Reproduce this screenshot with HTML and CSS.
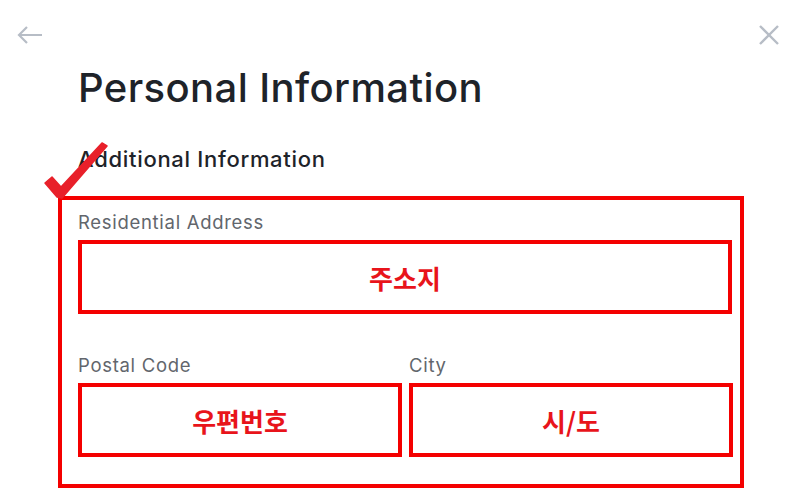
FILE: index.html
```html
<!DOCTYPE html>
<html lang="en">
<head>
<meta charset="utf-8">
<link rel="stylesheet" href="styles.css">
</head>
<body>
<div class="page">
  <div class="topbar">
    <svg class="icon back" width="28" height="20" viewBox="0 0 28 20"><path d="M26 10H3M11 2L3 10l8 8" fill="none" stroke="#b7bdc6" stroke-width="2.2"/></svg>
    <svg class="icon close" width="22" height="22" viewBox="0 0 22 22"><path d="M2 2l18 18M20 2L2 20" fill="none" stroke="#b7bdc6" stroke-width="2.4"/></svg>
  </div>
  <h1 class="title">Personal Information</h1>
  <h2 class="subtitle">Additional Information</h2>
  <div class="annot">
    <svg class="check" width="72" height="62" viewBox="0 0 72 62"><path d="M5 44 L12 38 L21 48 L62 4 L67 7 L22 59 L17 58 Z" fill="#e8202a" stroke="#e8202a" stroke-width="1.5" stroke-linejoin="round"/></svg>
    <div class="field">
      <div class="label">Residential Address</div>
      <div class="box">주소지</div>
    </div>
    <div class="row">
      <div class="field">
        <div class="label">Postal Code</div>
        <div class="box">우편번호</div>
      </div>
      <div class="field">
        <div class="label">City</div>
        <div class="box">시/도</div>
      </div>
    </div>
  </div>
</div>
</body>
</html>
```
FILE: styles.css
```css
html, body { margin: 0; padding: 0; background: #fff; }
body { font-family: Inter, "Noto Sans", "Noto Sans CJK KR", sans-serif; width: 800px; height: 488px; overflow: hidden; }
.page { position: relative; }
.topbar { display: flex; justify-content: space-between; align-items: center; padding: 24px 20px 0 16px; height: 22px; }
.title { margin: 20px 0 0 78px; font-size: 40px; line-height: 44px; font-weight: 500; color: #1e2329; letter-spacing: 0.4px; }
.subtitle { margin: 36px 0 0 78px; font-size: 22px; line-height: 26px; font-weight: 500; color: #1e2329; letter-spacing: 0.7px; }
.annot { position: relative; margin: 24px 0 0 58px; width: 686px; height: 292px; box-sizing: border-box; border: 4px solid #f40000; padding: 10px 8px 0 16px; }
.check { position: absolute; left: -22px; top: -61px; }
.label { font-size: 18.5px; line-height: 24px; color: #62666c; height: 30px; letter-spacing: 0.7px; }
.box { box-sizing: border-box; height: 74px; border: 4px solid #f40000; display: flex; align-items: center; justify-content: center; font-family: "Noto Sans CJK KR", sans-serif; font-weight: 700; font-size: 26px; color: #e8141b; }
.row { display: grid; grid-template-columns: 324px 324px; gap: 7px; margin-top: 39px; }
```
